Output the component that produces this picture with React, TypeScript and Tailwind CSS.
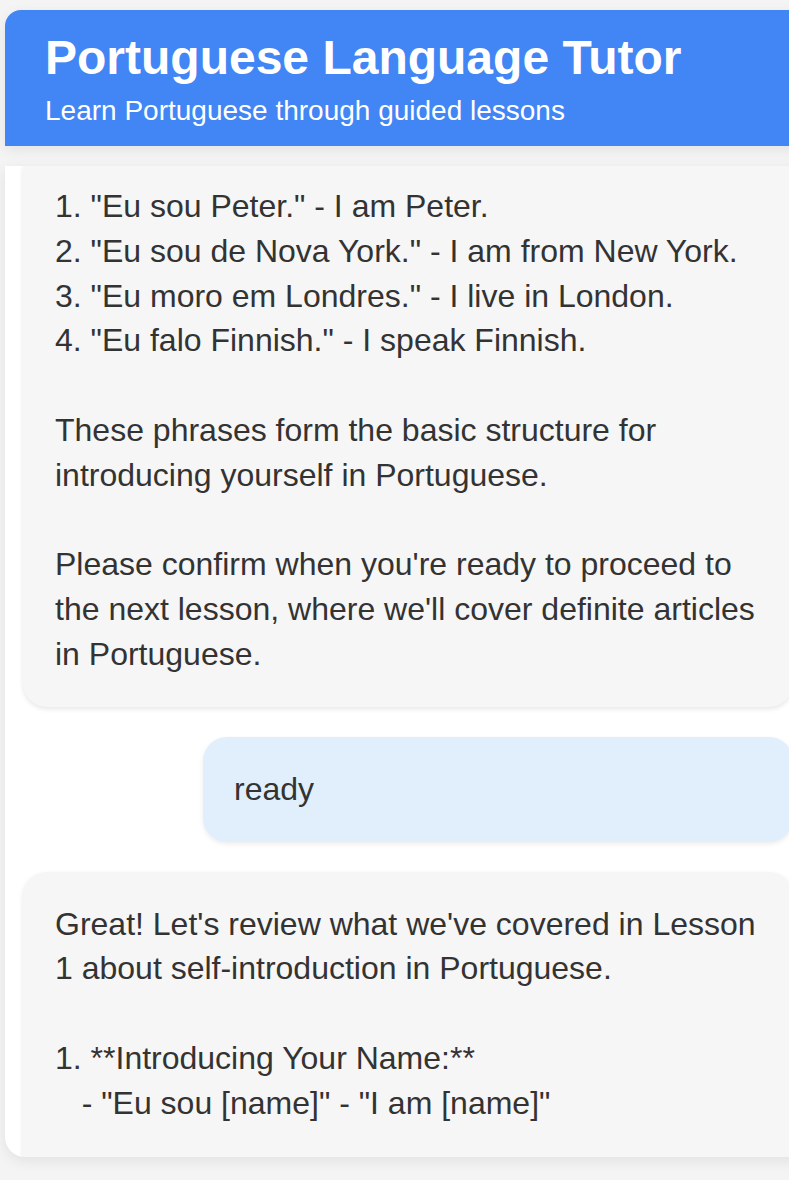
import React from "react";

const font = { fontFamily: '"Liberation Sans", Arial, sans-serif' };

export default function App() {
  const first = [
    '1. "Eu sou Peter." - I am Peter.',
    '2. "Eu sou de Nova York." - I am from New York.',
    '3. "Eu moro em Londres." - I live in London.',
    '4. "Eu falo Finnish." - I speak Finnish.',
    "",
    "These phrases form the basic structure for",
    "introducing yourself in Portuguese.",
    "",
    "Please confirm when you're ready to proceed to",
    "the next lesson, where we'll cover definite articles",
    "in Portuguese.",
  ];
  const last = [
    "Great! Let's review what we've covered in Lesson",
    "1 about self-introduction in Portuguese.",
    "",
    "1. **Introducing Your Name:**",
    '   - "Eu sou [name]" - "I am [name]"',
  ];
  return (
    <div
      className="w-[789px] h-[1180px] overflow-hidden bg-[#f4f4f4] pt-[10px] pl-[5px]"
      style={font}
    >
      <div className="w-[806px]">
        <header className="rounded-tl-[16px] bg-[#4285f4] pl-[40px] pt-[20px] pb-[19px] text-white shadow-[0_4px_14px_rgba(0,0,0,0.07)]">
          <h1 className="text-[48px] leading-[55px] font-bold">
            Portuguese Language Tutor
          </h1>
          <p className="mt-[10px] text-[28px] leading-[32px]">
            Learn Portuguese through guided lessons
          </p>
        </header>
        <div className="mt-[20px] h-[991px] overflow-hidden rounded-bl-[20px] bg-white px-[18px] shadow-[0_4px_14px_rgba(0,0,0,0.08)]">
          <div className="flex flex-col gap-[30px] text-[32px] leading-[44.8px] text-[#333]">
            <div className="rounded-b-[24px] bg-[#f6f6f6] px-[32px] pt-[18px] pb-[30px] shadow-[0_2px_5px_rgba(0,0,0,0.1)] whitespace-pre">
              {first.map((l, i) => (
                <div key={i} className="h-[44.8px]">
                  {l}
                </div>
              ))}
            </div>
            <div className="ml-auto w-[590px] rounded-[24px] bg-[#e1effc] px-[31px] py-[30px] shadow-[0_2px_5px_rgba(0,0,0,0.08)]">
              ready
            </div>
            <div className="rounded-[24px] bg-[#f6f6f6] px-[32px] pt-[30px] pb-[120px] shadow-[0_2px_5px_rgba(0,0,0,0.1)] whitespace-pre">
              {last.map((l, i) => (
                <div key={i} className="h-[44.8px]">
                  {l}
                </div>
              ))}
            </div>
          </div>
        </div>
      </div>
    </div>
  );
}
